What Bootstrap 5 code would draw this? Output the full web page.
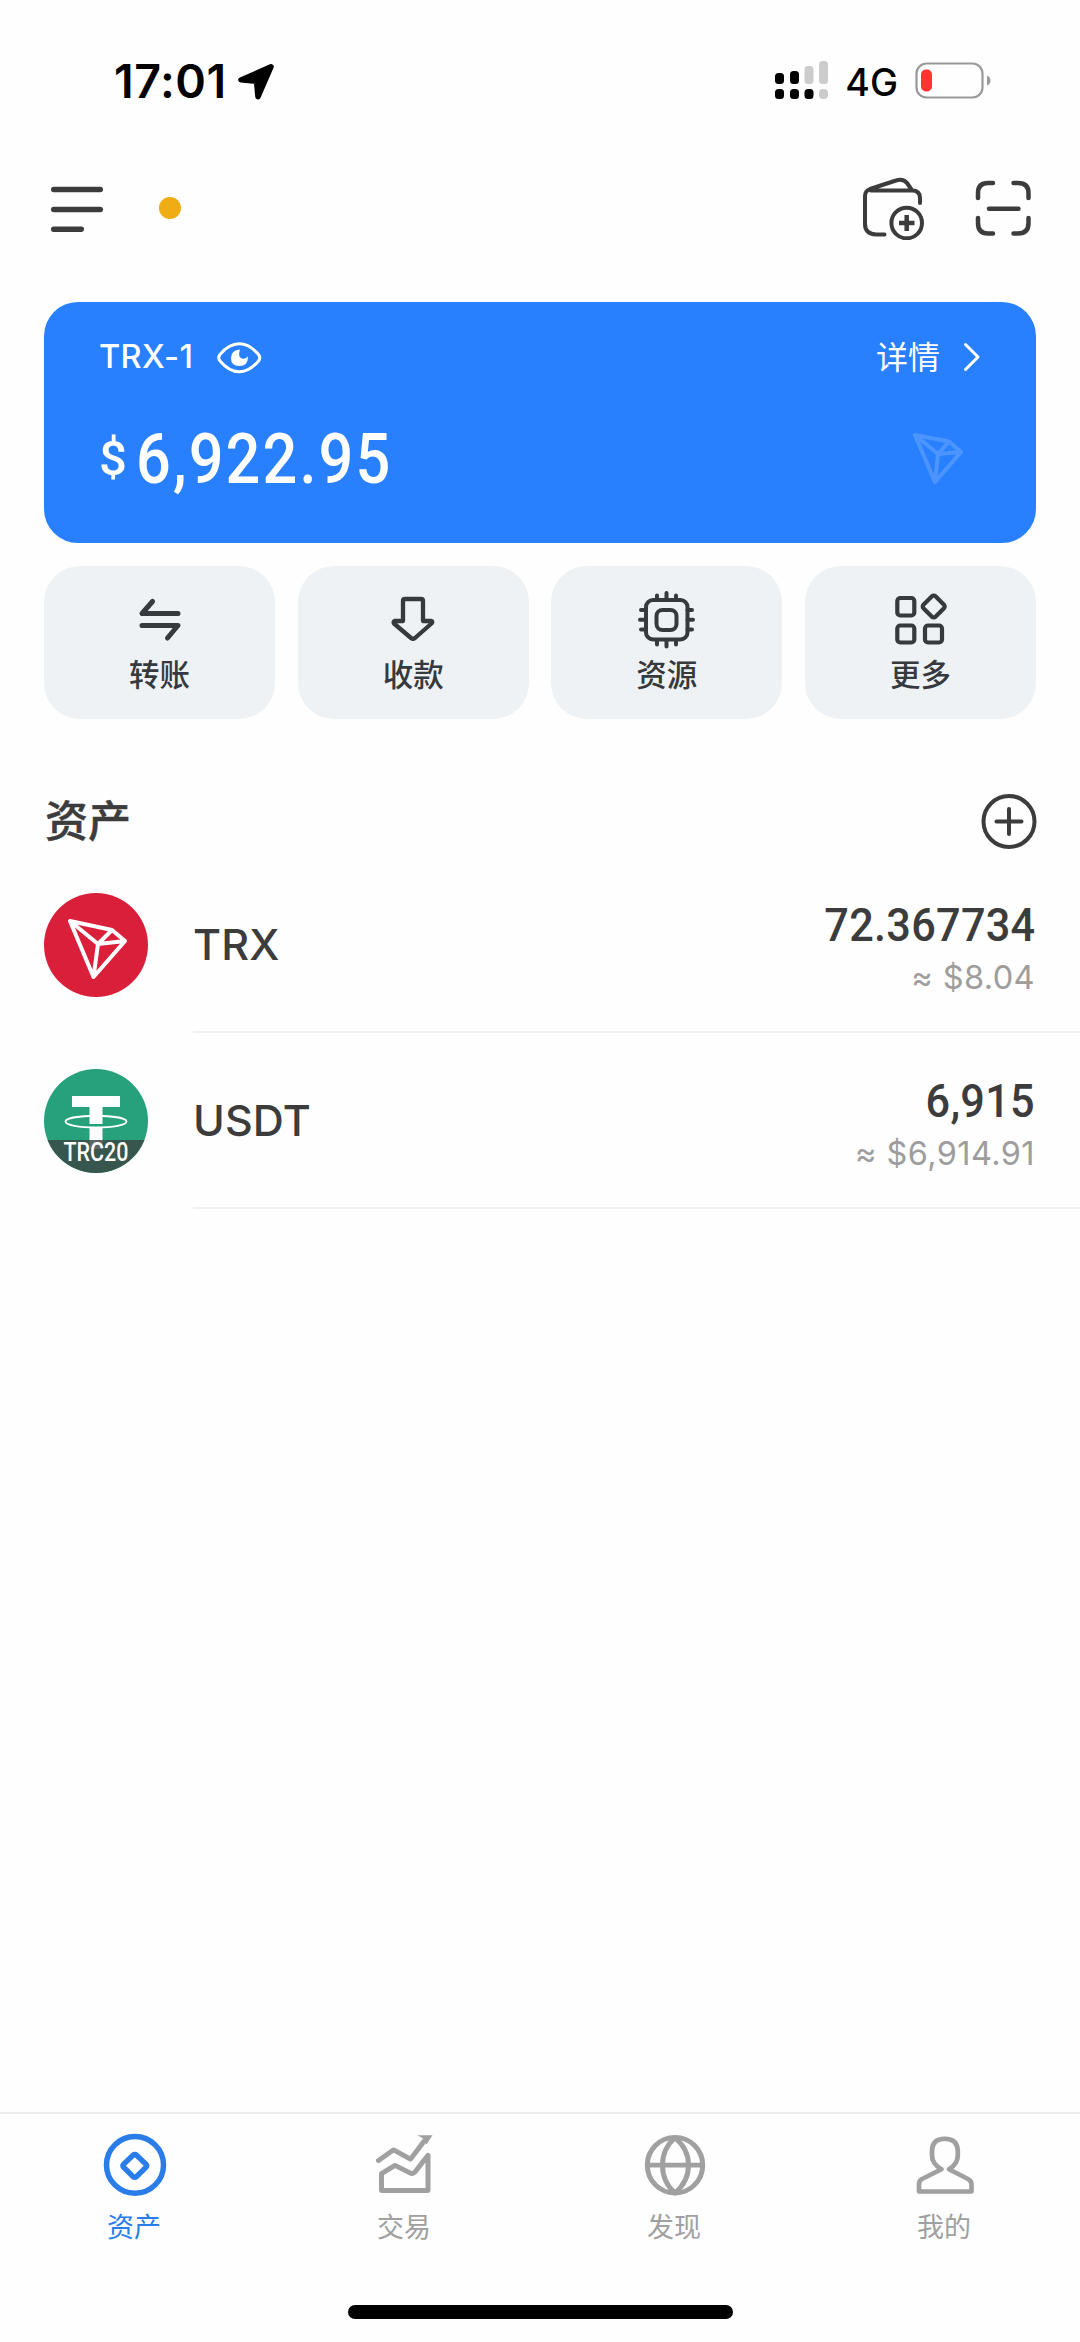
<!DOCTYPE html>
<html lang="zh-CN">
<head>
<meta charset="utf-8">
<meta name="viewport" content="width=device-width, initial-scale=1">
<title>资产</title>
<link href="https://cdn.jsdelivr.net/npm/bootstrap@5.3.0/dist/css/bootstrap.min.css" rel="stylesheet">
<style>
body{font-family:Inter,"Noto Sans CJK SC",sans-serif;color:#3c3c3c;background:#fefefe;line-height:1}
svg{display:block;flex:none;fill:none;stroke:currentColor;stroke-linecap:round;stroke-linejoin:round}
.screen{height:2342px;overflow:hidden}
.statusbar{height:162px;padding:0 88px 0 114px;color:#000}
.clock{font-size:46.5px;font-weight:600;letter-spacing:.5px}
.net{font-size:37.5px;font-weight:500}
.toolbar{height:139.5px;padding:0 49px 47px 51px}
.status-dot{width:22px;height:22px;background:#efac14;margin-left:56px}
.wallet{height:241.5px;margin:0 44px;border-radius:34px;background:#2880ff;padding:34px 54px 0 56px}
.wallet-top{height:44px}
.wallet-name{font-size:32.5px;letter-spacing:.4px;font-weight:450;margin-left:-1px}
.detail-link{font-size:32px;color:#fff}
.din{font-family:Roboto,sans-serif;font-weight:500;white-space:nowrap}
.balance{height:80px;margin-top:39px}
.balance-sign{font-size:49px;width:37px;margin-left:-1px}
.balance-num{font-size:70px;letter-spacing:2.4px;transform:scaleX(.875);transform-origin:left}
.actions{margin:22.5px 44px 0;gap:22.7px}
.action{height:153.500px;border-radius:36px;background:#eef2f5;color:#36393d;font-size:30.5px;font-weight:500;padding-top:24px;flex:1 1 0}
.action span{margin-top:10px}
.assets-head{height:64px;margin:71px 43px 0 45px}
.assets-head h1{font-size:43px;font-weight:500;-webkit-text-stroke:.5px currentColor}
.assets-list{margin-top:2.5px}
.asset{height:176px;padding-left:44px}
.asset-body{margin-left:45px;padding-right:45px;border-bottom:2px solid #f1f1f1;height:176px}
.asset-name{font-size:43px;letter-spacing:.1px;font-weight:450;padding-top:2px}
.amount{font-size:47px;letter-spacing:.3px;transform:scaleX(.92);transform-origin:right;height:47px}
.fiat{font-size:32.5px;color:#9d9d9d;margin-top:14px;letter-spacing:.4px;margin-bottom:-8px}
.tabs{height:230px;border-top:2px solid #ededed;color:#a0a0a0;font-size:27px}
.tabs .on{color:#2a7de9}
.tab-item{flex:1 1 0;padding-top:17px;gap:13px}
.tab-item span{margin-left:-2px}
.home{width:385px;height:14px;background:#000;margin-bottom:23px}
</style>
<script src="https://cdn.jsdelivr.net/npm/bootstrap@5.3.0/dist/js/bootstrap.bundle.min.js"></script>
</head>
<body>
<div class="screen d-flex flex-column">
  <header class="statusbar d-flex align-items-center justify-content-between">
    <div class="d-flex align-items-center">
      <span class="clock">17:01</span>
      <svg class="ms-2" width="42" height="42" viewBox="235 60 42 43.400" preserveAspectRatio="none"><path d="M271 67 241 80.500 256.500 82 258 98Z" fill="currentColor" stroke-width="5.500"/></svg>
    </div>
    <div class="d-flex align-items-center">
      <svg width="54" height="42" viewBox="775 60 54 42"><g stroke="none" fill="currentColor"><rect x="775" y="73" width="9" height="11" rx="3.500"/><rect x="790" y="71" width="9" height="13" rx="3.500"/><rect x="775" y="89" width="9" height="10" rx="3.500"/><rect x="790" y="89" width="9" height="10" rx="3.500"/><rect x="804.500" y="89" width="9" height="10" rx="3.500"/><g fill="#ccc"><rect x="804.500" y="66" width="9" height="18" rx="3.500"/><rect x="819" y="61" width="9" height="23" rx="3.500"/><rect x="819" y="89" width="9" height="10" rx="4"/></g></g></svg>
      <span class="net ms-3 pt-1">4G</span>
      <svg class="ms-3" width="78" height="40" viewBox="914 60.500 78 40"><rect x="916.500" y="63" width="66" height="34" rx="10" stroke="#999" stroke-width="2.200"/><rect x="921" y="69" width="11" height="22" rx="5" fill="#ff3431" stroke="none"/><path d="M987 75q3.500 1.500 3.500 5t-3.500 5Z" fill="#999" stroke="none"/></svg>
    </div>
  </header>

  <nav class="toolbar d-flex align-items-center justify-content-between">
    <div class="d-flex align-items-center">
      <svg width="52" height="48" viewBox="51 184 52 48" stroke-width="5.500"><path d="M53.700 189.500H100.300M53.700 209.500H100.300M53.700 229.300H81.300"/></svg>
      <span class="status-dot rounded-circle"></span>
    </div>
    <div class="d-flex align-items-center">
      <svg width="64" height="64" viewBox="862 176 64 64" stroke-width="4"><path d="M884.500 234.500H876Q865 234 865 224V196Q865 191 870 189L896 180.500Q903 178 907 183L911.500 189.500M871 190.500H912Q920 190.500 920 198V203"/><circle cx="906.700" cy="223" r="15.300"/><path d="M906.700 215V231M899 223H914.500" stroke-width="4.500" stroke-linecap="butt"/></svg>
      <svg width="56" height="56" viewBox="975 180 56 56" stroke-width="4.500" style="margin-left:49px"><path d="M978 198V193Q978 183 988 183H993M1013.500 183H1018Q1028.500 183 1028.500 193V198M978 218V223Q978 233.500 988 233.500H993M1013.500 233.500H1018Q1028.500 233.500 1028.500 223V218M989 208.700H1018.500"/></svg>
    </div>
  </nav>

  <section class="wallet text-white">
    <div class="wallet-top d-flex align-items-center justify-content-between">
      <div class="d-flex align-items-center">
        <span class="wallet-name">TRX-1</span>
        <svg width="46" height="34" viewBox="216 341 46 34" stroke-width="3" style="margin-left:23px"><path d="M220 354.500Q229 343.800 239.300 343.800T258.500 354.500Q261 357.800 258.500 361Q249.500 371.800 239.300 371.800T220 361Q217.500 357.800 220 354.500Z"/><path d="M240 349.500Q237.500 357 242 358.500Q245 359.500 248 356.500Q248 366 239.300 366Q231 366 231 358Q231 350 240 349.500Z" fill="#fff" stroke="none"/></svg>
      </div>
      <a href="#" class="detail-link d-flex align-items-center text-decoration-none">详情
        <svg width="20" height="32" viewBox="963 341.500 20 32" stroke-width="3" style="margin-left:22px"><path d="M966.500 344 979 356.500 966.500 369"/></svg>
      </a>
    </div>
    <div class="balance d-flex align-items-center justify-content-between">
      <div class="d-flex align-items-center">
        <span class="din balance-sign">$</span><span class="din balance-num">6,922.95</span>
      </div>
      <svg width="54" height="56" viewBox="911 431 54 56" stroke-width="4" opacity=".17" style="margin-right:17px"><path d="M915 435 949 441.500 961 452 935 482ZM915 435 938 454 961 452M949 441.500 938 454 935 482"/></svg>
    </div>
  </section>

  <section class="actions d-flex">
    <div class="action d-flex flex-column align-items-center"><svg width="60" height="60" viewBox="129.500 590 60 60" stroke-width="5"><path d="M153 601.500 142.500 613.500H178.500M142.500 625.500H178.500L168 638"/></svg><span>转账</span></div>
    <div class="action d-flex flex-column align-items-center"><svg width="60" height="60" viewBox="383 590 60 60" stroke-width="4.300"><path d="M405 599H421Q423 599 423 601V621H431.500Q433 621.500 431.500 623.500L415 638Q413 639.500 411 638L394 623.500Q393 621.500 394.500 621H403V601Q403 599 405 599Z"/></svg><span>收款</span></div>
    <div class="action d-flex flex-column align-items-center"><svg width="60" height="60" viewBox="637 590 60 60" stroke-width="4"><rect x="646" y="600" width="41.500" height="39.500" rx="7"/><rect x="656.500" y="610" width="20" height="20" rx="6"/><path d="M657 595.500V600M666.500 593V600M676 595.500V600M657 640V644.500M666.500 640V646.500M676 640V644.500M641 610H646M640 619.700H646M641 629.500H646M687.500 610H692M687.500 619.700H693M687.500 629.500H692"/></svg><span>资源</span></div>
    <div class="action d-flex flex-column align-items-center"><svg width="60" height="60" viewBox="891 590.500 60 60" stroke-width="4.200"><rect x="897.300" y="598.500" width="17" height="17.500" rx="3"/><rect x="897.300" y="626" width="17" height="17" rx="3"/><rect x="925" y="626" width="17" height="17" rx="3"/><rect x="925.200" y="598.500" width="17" height="17" rx="2.500" transform="rotate(45 933.700 607)"/></svg><span>更多</span></div>
  </section>

  <section>
    <div class="assets-head d-flex align-items-center justify-content-between">
      <h1 class="m-0">资产</h1>
      <svg width="56" height="56" viewBox="0 0 56 56" stroke-width="4"><circle cx="28" cy="27.500" r="25.500"/><path d="M28 15V40M15.500 27.500H40.500"/></svg>
    </div>
    <div class="assets-list">
    <div class="asset d-flex align-items-center">
      <svg width="104" height="104" viewBox="44 892 104 104"><circle cx="96" cy="944" r="52" fill="#d91f3a" stroke="none"/><path d="M70 920 112 929 125 940 93.500 976ZM70 920 98 943 125 940M112 929 98 943 93.500 976" stroke="#fff" stroke-width="4"/></svg>
      <div class="asset-body d-flex align-items-center justify-content-between flex-fill">
        <span class="asset-name">TRX</span>
        <div class="text-end"><div class="din amount">72.367734</div><div class="fiat">≈ $8.04</div></div>
      </div>
    </div>
    <div class="asset d-flex align-items-center">
      <svg width="104" height="104" viewBox="0 0 104 104"><clipPath id="coin"><circle cx="52" cy="52" r="52"/></clipPath><g clip-path="url(#coin)" stroke="none"><path d="M0 0H104V104H0Z" fill="#26a17b"/><path d="M28 27H76V38H58.500V55H45.500V38H28ZM45.500 59H58.500V80H45.500Z" fill="#fff"/><path d="M45.500 47C32 47.500 21.500 49.500 21.500 52.500C21.500 56 35 58.500 52 58.500S82.500 56 82.500 52.500C82.500 49.500 72 47.500 58.500 47" stroke="#fff" stroke-width="1.800"/><path d="M0 71H104V104H0Z" fill="#3c4644" fill-opacity=".82"/></g><text x="52" y="91.500" text-anchor="middle" textLength="65" lengthAdjust="spacingAndGlyphs" font-family="Roboto, sans-serif" font-weight="500" font-size="25" fill="#fff" stroke="none">TRC20</text></svg>
      <div class="asset-body d-flex align-items-center justify-content-between flex-fill">
        <span class="asset-name">USDT</span>
        <div class="text-end"><div class="din amount">6,915</div><div class="fiat">≈ $6,914.91</div></div>
      </div>
    </div>
    </div>
  </section>

  <footer class="tabs mt-auto d-flex flex-column">
    <div class="d-flex flex-fill">
      <div class="tab-item on d-flex flex-column align-items-center"><svg width="70" height="70" viewBox="100 2132 70 72.300" preserveAspectRatio="none" stroke-width="5.500"><ellipse cx="135" cy="2167" rx="28.500" ry="29.300"/><rect x="125.800" y="2159" width="18" height="18" rx="2" transform="rotate(45 134.800 2168)"/></svg><span>资产</span></div>
      <div class="tab-item d-flex flex-column align-items-center"><svg width="70" height="70" viewBox="369.500 2132 70 72.300" preserveAspectRatio="none" stroke-width="5"><path d="M378 2162.500 393 2151.500 410 2161 425.500 2140M381 2193.500V2176L394.500 2167.500 411 2176Q414 2176 417 2171L427.500 2157V2193.500Z"/><path d="M417 2136.500H432L426 2146 423 2140Z" fill="currentColor" stroke="none"/></svg><span>交易</span></div>
      <div class="tab-item d-flex flex-column align-items-center"><svg width="70" height="70" viewBox="640 2132 70 72.300" preserveAspectRatio="none" stroke-width="5"><ellipse cx="675" cy="2167.300" rx="27.700" ry="28.700"/><path d="M648 2167.300H702M675 2139Q662.500 2150 662.500 2167.300T675 2196Q688.500 2184 688.500 2167.300T675 2139Z"/></svg><span>发现</span></div>
      <div class="tab-item d-flex flex-column align-items-center"><svg width="70" height="70" viewBox="910 2132 70 72.300" preserveAspectRatio="none" stroke-width="4.700"><path d="M941.500 2171.500Q932 2166 932 2157V2153Q932 2140 944.800 2140T957.800 2153V2157Q957.800 2166 949 2171.500L968 2181.500Q971.500 2183.500 971.500 2187V2194.500H919V2187Q919 2183.500 922 2181.500Z"/></svg><span>我的</span></div>
    </div>
    <div class="home rounded-pill align-self-center"></div>
  </footer>
</div>
</body>
</html>
